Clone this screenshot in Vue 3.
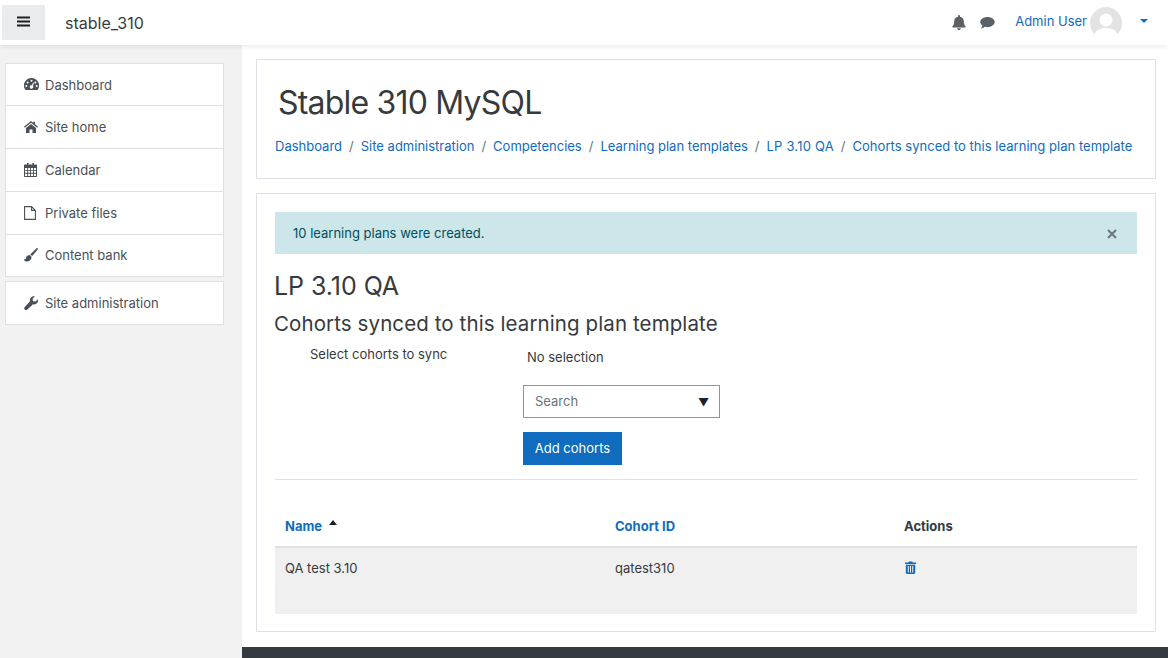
<script setup>
const nav = [
  { label: 'Dashboard', icon: 'dash' },
  { label: 'Site home', icon: 'home' },
  { label: 'Calendar', icon: 'cal' },
  { label: 'Private files', icon: 'file' },
  { label: 'Content bank', icon: 'brush' },
]
const crumbs = ['Dashboard', 'Site administration', 'Competencies', 'Learning plan templates', 'LP 3.10 QA', 'Cohorts synced to this learning plan template']
</script>

<template>
  <div class="page">
    <header class="topbar">
      <button class="burger" aria-label="Menu">
        <svg width="13" height="11" viewBox="0 0 13 11"><path d="M0 .5h13v2H0zM0 4.500h13v2H0zM0 8.500h13v2H0z" fill="#1d2125"/></svg>
      </button>
      <span class="brand">stable_310</span>
      <div class="topright">
        <svg class="ico-bell" width="14" height="15" viewBox="0 0 14 15"><path d="M7 0c.6 0 1 .5 1 1v.7c2.300.4 3.800 2.300 3.800 4.500 0 3.200 1 4.300 1.800 5.100.3.400 0 1.200-.6 1.200H1c-.6 0-.9-.8-.6-1.200.8-.8 1.800-1.900 1.800-5.100C2.200 4 3.700 2.100 6 1.700V1c0-.5.400-1 1-1zM5.200 13.200h3.600C8.800 14.200 8 15 7 15s-1.800-.8-1.800-1.800z" fill="#5a6268"/></svg>
        <svg class="ico-chat" width="15" height="13" viewBox="0 0 15 13"><path d="M7.500 1C11.400 1 14.700 3.300 14.700 6.100s-3.300 5.100-7.200 5.100c-1 0-1.900-.1-2.700-.4C4 11.600 2.500 12.500.8 12.500c.9-.9 1.500-2 1.600-2.900C1 8.600.3 7.400.3 6.100.3 3.300 3.600 1 7.500 1z" fill="#5a6268"/></svg>
        <a class="user">Admin User</a>
        <span class="avatar">
          <svg width="32" height="32" viewBox="0 0 32 32"><circle cx="16" cy="16" r="16" fill="#e3e3e3"/><circle cx="16" cy="13" r="6.500" fill="#fff"/><path d="M4 30c1-7 6-9 12-9s11 2 12 9a16 16 0 0 1-24 0z" fill="#fff"/></svg>
        </span>
        <span class="caret"></span>
      </div>
    </header>

    <div class="body">
      <aside class="side">
        <ul class="group">
          <li v-for="item in nav" :key="item.label" class="row">
            <span class="ico">
              <svg v-if="item.icon === 'dash'" width="15" height="13" viewBox="0 0 15 13"><path fill-rule="evenodd" d="M7.500 0a7.500 7.500 0 0 1 6.400 11.400c-.2.300-.5.600-.9.600H2c-.4 0-.7-.3-.9-.6A7.500 7.500 0 0 1 7.500 0zM7.500 1.800a1 1 0 1 0 0 2 1 1 0 0 0 0-2zM3.600 3.500a1 1 0 1 0 0 2 1 1 0 0 0 0-2zM11.400 3.500a1 1 0 1 0 0 2 1 1 0 0 0 0-2zM2.300 7a1 1 0 1 0 0 2 1 1 0 0 0 0-2zM12.700 7a1 1 0 1 0 0 2 1 1 0 0 0 0-2zM9.400 4.500L7.700 7.200a1.700 1.700 0 1 0 1.100.6l1.400-2.900z" fill="#495057"/></svg>
              <svg v-else-if="item.icon === 'home'" width="14" height="12" viewBox="0 0 14 12"><path d="M7 0l2.300 1.900V.8h1.700v2.500L14 5.800l-.8.900L7 1.700.8 6.700 0 5.800zM7 2.900l5 4V12H8.500V8.500h-3V12H2V6.900z" fill="#495057"/></svg>
              <svg v-else-if="item.icon === 'cal'" width="13" height="14" viewBox="0 0 13 14"><path fill-rule="evenodd" d="M3 0h1.500v1.500h4V0H10v1.500h2c.6 0 1 .4 1 1V13c0 .6-.4 1-1 1H1c-.6 0-1-.4-1-1V2.500c0-.6.400-1 1-1h2zM1 5v2h2.200V5zM4.100 5v2h2V5zM7 5v2h2V5zM9.900 5v2H12V5zM1 7.800v2h2.200v-2zM4.100 7.800v2h2v-2zM7 7.800v2h2v-2zM9.900 7.800v2H12v-2zM1 10.700V13h2.200v-2.300zM4.100 10.700V13h2v-2.300zM7 10.700V13h2v-2.300zM9.900 10.700V13H12v-2.300z" fill="#495057"/></svg>
              <svg v-else-if="item.icon === 'file'" width="12" height="14" viewBox="0 0 12 14"><path d="M.6.600h7l3.800 3.800v9H.6zM7.600.600v3.800h3.800" fill="none" stroke="#495057" stroke-width="1.100"/></svg>
              <svg v-else width="14" height="14" viewBox="0 0 14 14"><path d="M13.600.2c.4.300.4.800.1 1.200L8.200 8.100 6.200 6.400 12.400.4c.3-.4.800-.5 1.200-.2zM5.600 7.100l2 1.700c-.1 2.200-1.500 4.700-4.300 4.800C1.500 13.700 0 12.800 0 11.300c1.300 0 1.700-.6 2-1.600.4-1.600 2-2.600 3.600-2.600z" fill="#495057"/></svg>
            </span>
            <span>{{ item.label }}</span>
          </li>
        </ul>
        <ul class="group second">
          <li class="row">
            <span class="ico">
              <svg width="14" height="14" viewBox="0 0 14 14"><path d="M13.800 3.200c.5 1.700 0 3.400-1.300 4.400-1 .8-2.300 1-3.500.7L3.400 13.600c-.8.700-1.900.7-2.600 0-.8-.8-.8-2 0-2.700L6 5.200C5.600 3.900 6 2.500 7 1.400 8 .4 9.500-.1 10.900.3L8.600 2.700l.4 2.500 2.500.4z" fill="#495057"/></svg>
            </span>
            <span>Site administration</span>
          </li>
        </ul>
      </aside>

      <div class="right">
        <main class="main">
          <section class="card head">
            <h1>Stable 310 MySQL</h1>
            <nav class="crumbs">
              <template v-for="(c, i) in crumbs" :key="c">
                <span v-if="i" class="sep">/</span>
                <a>{{ c }}</a>
              </template>
            </nav>
          </section>

          <section class="card content">
            <div class="alert">
              <span>10 learning plans were created.</span>
              <svg class="close" width="10" height="10" viewBox="0 0 10 10"><path d="M1 1l8 8M9 1l-8 8" stroke="#6d7a7e" stroke-width="2.200" fill="none"/></svg>
            </div>
            <h2>LP 3.10 QA</h2>
            <h3>Cohorts synced to this learning plan template</h3>

            <div class="form">
              <div class="label">Select cohorts to sync</div>
              <div class="controls">
                <div class="none">No selection</div>
                <div class="select">
                  <span class="ph">Search</span>
                  <span class="arrow">▼</span>
                </div>
                <button class="btn">Add cohorts</button>
              </div>
            </div>

            <table class="table">
              <thead>
                <tr>
                  <th class="c1"><a>Name</a><span class="up"></span></th>
                  <th class="c2"><a>Cohort ID</a></th>
                  <th>Actions</th>
                </tr>
              </thead>
              <tbody>
                <tr>
                  <td>QA test 3.10</td>
                  <td>qatest310</td>
                  <td>
                    <svg class="trash" width="11" height="13" viewBox="0 0 11 13"><path fill-rule="evenodd" d="M0 1.600h3.300L3.800.5h3.400l.5 1.100H11v1.400H0zM.8 3.700h9.400v8.100c0 .7-.5 1.200-1.200 1.200H2c-.7 0-1.200-.5-1.200-1.200zM2.800 5v6.600h1V5zM5 5v6.600h1V5zM7.200 5v6.600h1V5z" fill="#0f6cbf"/></svg>
                  </td>
                </tr>
              </tbody>
            </table>
          </section>
        </main>
        <footer class="foot"></footer>
      </div>
    </div>
  </div>
</template>

<style>
html, body { margin: 0; background: #fff; overflow: hidden; }
</style>

<style scoped>
.page {
  width: 1168px;
  height: 658px;
  overflow: hidden;
  font-family: Inter, "Liberation Sans", sans-serif;
  font-size: 13px;
  color: #373a3c;
  display: flex;
  flex-direction: column;
}
a { color: #0f6cbf; text-decoration: none; }
ul { list-style: none; margin: 0; padding: 0; }
h1, h2, h3 { font-weight: 400; margin: 0; color: #373a3c; }

.topbar {
  height: 45px;
  flex: none;
  background: #fff;
  box-shadow: 0 2px 4px rgba(0, 0, 0, .08);
  display: flex;
  align-items: center;
  padding: 0 20px 0 2px;
  position: relative;
  z-index: 2;
  box-sizing: border-box;
}
.burger {
  width: 43px;
  height: 35px;
  margin: 0 20px 0 0;
  border: 0;
  background: #e9ecef;
  display: flex;
  align-items: center;
  justify-content: center;
  padding: 0 0 2px;
}
.brand { font-size: 16px; }
.topright { margin-left: auto; display: flex; align-items: center; }
.ico-bell { margin-right: 14px; }
.ico-chat { margin-right: 20px; }
.user { margin-top: -3px; }
.avatar { width: 32px; height: 32px; margin-left: 3px; display: block; }
.caret {
  margin-left: 18px;
  margin-top: -3px;
  border-top: 4px solid #0f6cbf;
  border-left: 4px solid transparent;
  border-right: 4px solid transparent;
}

.body { flex: 1; display: flex; min-height: 0; }
.side {
  width: 242px;
  flex: none;
  background: #f2f2f2;
  padding: 18px 18px 0 5px;
  box-sizing: border-box;
  color: #495057;
}
.group { background: #fff; border: 1px solid #dee2e6; }
.second { margin-top: 4px; }
.row {
  height: 42px;
  display: flex;
  align-items: center;
  padding-left: 18px;
  border-top: 1px solid #dee2e6;
}
.row:first-child { border-top: 0; height: 41px; }
.row:last-child { padding-bottom: 1px; height: 40px; }
.second .row { height: 42px; padding-bottom: 0; }
.ico { width: 21px; flex: none; display: flex; }

.right { flex: 1; min-width: 0; display: flex; flex-direction: column; }
.main {
  flex: 1;
  padding: 14px 12px 0 14px;
  min-height: 0;
  background: #fff;
}
.card { border: 1px solid #dee2e6; background: #fff; box-sizing: border-box; }
.head { height: 120px; padding: 21px 18px 0; }
.head h1 { font-size: 32px; line-height: 44px; margin-left: 3px; letter-spacing: -.8px; }
.crumbs {
  margin-top: 11px;
  display: flex;
  white-space: nowrap;
  line-height: 20px;
}
.crumbs a:nth-of-type(5) { letter-spacing: .2px; }
.crumbs a:last-child { letter-spacing: .03px; }
.sep { color: #6a737b; margin: 0 7px; }

.content { height: 439px; margin-top: 14px; padding: 18px 18px 0; }
.alert {
  height: 42px;
  background: #cce6ea;
  color: #004f5c;
  display: flex;
  align-items: center;
  justify-content: space-between;
  padding: 0 20px 0 18px;
}
.close { margin-top: 1px; }
.content h2 { font-size: 25px; line-height: 32px; margin: 16px 0 0 -1px; letter-spacing: -.05px; }
.content h3 { font-size: 20.5px; line-height: 28px; margin: 8px 0 0 -1px; letter-spacing: .1px; }

.form {
  display: flex;
  margin-top: 6px;
  padding-bottom: 14px;
  border-bottom: 1px solid #dee2e6;
}
.label { width: 248px; padding-left: 35px; box-sizing: border-box; line-height: 20px; }
.controls { display: flex; flex-direction: column; align-items: flex-start; }
.none { margin-left: 4px; line-height: 20px; margin-top: 3px; }
.select {
  width: 197px;
  height: 33px;
  margin-top: 18px;
  border: 1px solid #8f959e;
  box-sizing: border-box;
  display: flex;
  align-items: center;
  justify-content: space-between;
  padding: 0 10px 0 11px;
  color: #6a737b;
}
.ph { margin-top: -1px; }
.arrow { color: #1d2125; font-size: 11px; }
.btn {
  width: 99px;
  height: 33px;
  margin-top: 14px;
  border: 0;
  background: #0f6cbf;
  color: #fff;
  font: inherit;
  padding: 0 0 2px;
}

.table { width: 100%; border-collapse: collapse; margin-top: 26px; table-layout: fixed; }
.table th {
  text-align: left;
  font-weight: 700;
  height: 41px;
  padding: 0 10px;
  border-bottom: 2px solid #dee2e6;
  box-sizing: border-box;
}
.c1 { width: 330px; }
.c2 { width: 289px; }
.table td {
  background: #f0f0f0;
  height: 67px;
  padding: 10px 10px 0;
  vertical-align: top;
  line-height: 20px;
  box-sizing: border-box;
}
.up {
  display: inline-block;
  vertical-align: 6px;
  margin-left: 7px;
  border-bottom: 5px solid #1d2125;
  border-left: 4px solid transparent;
  border-right: 4px solid transparent;
}
.trash { display: block; margin: 3px 0 0 1px; }

.foot { height: 11px; flex: none; background: #343a40; }
</style>
